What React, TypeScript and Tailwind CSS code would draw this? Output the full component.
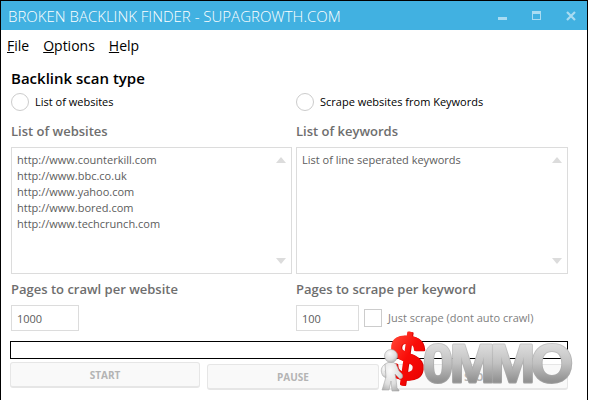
import React from "react";

const boxBorder = "border border-[#dcdcdc] bg-white";

function ScrollArrow({ direction }: { direction: "up" | "down" }) {
  return (
    <button type="button" aria-label={`Scroll ${direction}`} className="block">
      <svg width="10" height="6" viewBox="0 0 10 6" fill="#dcdcdc">
        <path d={direction === "up" ? "M5 0L10 6H0Z" : "M0 0H10L5 6Z"} />
      </svg>
    </button>
  );
}

function ListField({ id, label, text }: { id: string; label: string; text: string }) {
  return (
    <div className="flex flex-col">
      <label htmlFor={id} className="mb-[7px] h-[18px] text-[13px] leading-[18px] font-semibold text-[#6e6e6e]">
        {label}
      </label>
      <div className={`flex h-[127px] ${boxBorder}`}>
        <textarea
          id={id}
          defaultValue={text}
          className="min-w-0 flex-1 resize-none overflow-hidden px-[5px] py-1 text-[11px] leading-4 text-[#5c5c5c] outline-none"
        />
        <div className="flex flex-col justify-between py-[9px] pr-[5px]">
          <ScrollArrow direction="up" />
          <ScrollArrow direction="down" />
        </div>
      </div>
    </div>
  );
}

function ScanOption({ label }: { label: string }) {
  return (
    <label className="flex items-center gap-[6px] text-[11px] leading-4 text-black">
      <input type="radio" name="scan-type" className="size-[18px] appearance-none rounded-full border border-[#cccccc] bg-white" />
      {label}
    </label>
  );
}

function ActionButton({ label, className = "" }: { label: string; className?: string }) {
  return (
    <button
      type="button"
      className={`h-[26px] rounded-[3px] border border-b-2 border-[#e6e6e6] bg-[#f9f9f9] text-[10px] leading-4 font-bold text-[#b4b4b4] ${className}`}
    >
      {label}
    </button>
  );
}

function Watermark() {
  return (
    <svg
      className="pointer-events-none absolute right-[14px] bottom-0 h-[90px] w-[196px] overflow-visible"
      viewBox="377 310 196 90"
      role="img"
      aria-label="$0MMO"
    >
      <defs>
        <linearGradient id="metal" x1="0" y1="0" x2="0" y2="1">
          <stop offset="0.2" stopColor="#dcdcdc" />
          <stop offset="0.5" stopColor="#c2c2c2" />
          <stop offset="0.8" stopColor="#929292" />
        </linearGradient>
        <linearGradient id="rim" x1="0" y1="0" x2="0" y2="1">
          <stop offset="0.2" stopColor="#c6c6c6" />
          <stop offset="0.8" stopColor="#a0a0a0" />
        </linearGradient>
        <linearGradient id="red" x1="0" y1="0" x2="1" y2="1">
          <stop offset="0.2" stopColor="#ff3a2c" />
          <stop offset="0.5" stopColor="#f90c08" />
          <stop offset="1" stopColor="#e60000" />
        </linearGradient>
        <radialGradient id="clay" cx="0.4" cy="0.3" r="0.8">
          <stop offset="0" stopColor="#fafafa" />
          <stop offset="0.6" stopColor="#dedede" />
          <stop offset="1" stopColor="#a6a6a6" />
        </radialGradient>
      </defs>
      <g fontFamily="'Liberation Sans', sans-serif" fontWeight="bold" strokeLinejoin="round">
        <g fontSize="54">
          <text x="423 450 490 531" y="382" fill="url(#rim)" stroke="url(#rim)" strokeWidth="3" aria-hidden="true">0MMO</text>
          <text x="423 450 490 531" y="382" fill="url(#metal)" stroke="url(#metal)" strokeWidth="1">0MMO</text>
        </g>
        <g fontSize="64" transform="rotate(8 406 360)">
          <text x="389" y="380" fill="#d40000" stroke="#d40000" strokeWidth="2" aria-hidden="true">$</text>
          <text x="388" y="380" fill="url(#red)" stroke="url(#red)" strokeWidth="2">$</text>
        </g>
      </g>
      <g fill="url(#clay)" stroke="#a8a8a8" strokeWidth="0.6">
        <path d="M385 364C381 367 380 371 383 376L386 378L387 375L385 371L388 368Z" />
        <path d="M385 364Q391 360 396 364L399 371L402 374Q404 378 400 379L395 374L396 379L397 388L399 390V391H392L391 381L389 390H382L383 387L386 377Z" />
        <circle cx="391" cy="356" r="6.5" />
      </g>
    </svg>
  );
}

export default function App() {
  return (
    <div className="bg-white font-['Open_Sans','Noto_Sans',sans-serif]">
      <div className="relative mr-px min-h-screen border-x border-t border-black bg-white">
        <header className="flex h-[29px] items-center justify-between bg-[#41b1e1] pr-[11px] pl-[7px] text-white">
          <h1 className="text-[15px] leading-5 font-light whitespace-nowrap">BROKEN BACKLINK FINDER - SUPAGROWTH.COM</h1>
          <div className="flex gap-6 text-[#a9dcf2]">
            <button type="button" aria-label="Minimize">
              <svg width="10" height="10" viewBox="0 0 10 10"><path d="M0 6H9V9H0Z" fill="currentColor" /></svg>
            </button>
            <button type="button" aria-label="Maximize">
              <svg width="10" height="10" viewBox="0 0 10 10"><path fillRule="evenodd" d="M0 0H9V9H0ZM1 3V8H8V3Z" fill="currentColor" /></svg>
            </button>
            <button type="button" aria-label="Close">
              <svg width="10" height="10" viewBox="0 0 10 10"><path d="M1 1L9 9M9 1L1 9" stroke="currentColor" strokeWidth="2.2" /></svg>
            </button>
          </div>
        </header>

        <nav className="flex h-[31px] items-center gap-[14px] px-[6px] text-[14px] leading-5 text-black">
          <button type="button"><u>F</u>ile</button>
          <button type="button"><u>O</u>ptions</button>
          <button type="button"><u>H</u>elp</button>
        </nav>

        <main className="pt-[7px] pr-[19px] pl-[10px]">
          <h2 className="text-[15px] leading-5 font-semibold text-black">Backlink scan type</h2>
          <div className="mt-[5px] grid grid-cols-[281fr_272fr] gap-x-1">
            <ScanOption label="List of websites" />
            <ScanOption label="Scrape websites from Keywords" />
          </div>

          <div className="mt-[11px] grid grid-cols-[281fr_272fr] gap-x-1">
            <ListField
              id="websites"
              label="List of websites"
              text={"http://www.counterkill.com\nhttp://www.bbc.co.uk\nhttp://www.yahoo.com\nhttp://www.bored.com\nhttp://www.techcrunch.com"}
            />
            <ListField id="keywords" label="List of keywords" text="List of line seperated keywords" />
          </div>

          <div className="mt-[6px] grid grid-cols-[281fr_272fr] gap-x-1">
            <div>
              <label htmlFor="crawl" className="mb-[7px] block text-[13px] leading-[18px] font-semibold text-[#6e6e6e]">Pages to crawl per website</label>
              <input id="crawl" type="text" defaultValue="1000" className={`block h-[26px] w-[68px] px-[5px] text-[11px] text-[#5c5c5c] ${boxBorder}`} />
            </div>
            <div>
              <label htmlFor="scrape" className="mb-[7px] block text-[13px] leading-[18px] font-semibold text-[#6e6e6e]">Pages to scrape per keyword</label>
              <div className="flex items-center gap-[5px]">
                <input id="scrape" type="text" defaultValue="100" className={`block h-[26px] w-[63px] px-[5px] text-[11px] text-[#5c5c5c] ${boxBorder}`} />
                <label className="flex items-center gap-[6px] text-[11px] leading-4 whitespace-nowrap text-[#808080]">
                  <input type="checkbox" className="size-[18px] appearance-none border border-[#cccccc] bg-white" />
                  Just scrape (dont auto crawl)
                </label>
              </div>
            </div>
          </div>

          <div role="progressbar" aria-label="Scan progress" className="mt-[10px] -ml-px h-[18px] border border-black bg-white" />

          <div className="mt-[3px] -ml-px grid grid-cols-[190fr_172fr_182fr] items-start gap-x-[7px] pb-[10px]">
            <ActionButton label="START" />
            <ActionButton label="PAUSE" className="mt-[2px]" />
            <ActionButton label="STOP" className="mt-[2px]" />
          </div>
        </main>
        <Watermark />
      </div>
    </div>
  );
}
